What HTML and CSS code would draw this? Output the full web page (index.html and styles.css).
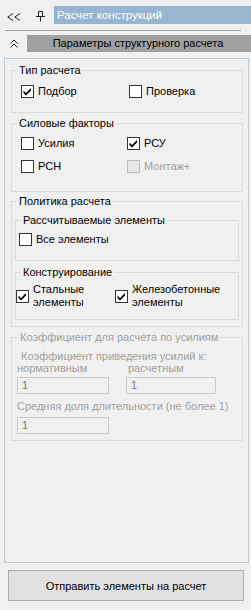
FILE: index.html
```html
<!DOCTYPE html>
<html lang="ru">
<head>
<meta charset="utf-8">
<title>Расчет конструкций</title>
<link rel="stylesheet" href="styles.css">
</head>
<body>
<div class="toprow">
  <span class="collapse"><svg width="14" height="8" viewBox="0 0 14 8"><path d="M6 0.5 L0.8 4 L6 7.5 M13 0.5 L7.8 4 L13 7.5" fill="none" stroke="#222" stroke-width="1"/></svg></span>
  <span class="pin"><svg width="9" height="11" viewBox="0 0 9 11"><path d="M2.5 0.5 H6.5 V5.5 M2.5 0.5 V5.5 M0 5.5 H9 M4.5 5.5 V10.5" fill="none" stroke="#222" stroke-width="1"/></svg></span>
  <div class="title">Расчет конструкций</div>
</div>
<div class="sep"></div>
<div class="secrow">
  <span class="chev"><svg width="8" height="9" viewBox="0 0 8 9"><path d="M0.5 4.5 L4 1 L7.5 4.5 M0.5 8.5 L4 5 L7.5 8.5" fill="none" stroke="#222" stroke-width="1"/></svg></span>
  <div class="secbar">Параметры структурного расчета</div>
</div>
<div class="panel">
  <fieldset class="grp g1">
    <legend>Тип расчета</legend>
    <div class="body cols c108">
      <label class="chk"><span class="box"><svg class="tick" width="11" height="11" viewBox="0 0 11 11"><path d="M1.5 4.5 L4 7 L9 2 L9 4.5 L4 9.5 L1.5 7 Z" fill="#000"/></svg></span>Подбор</label>
      <label class="chk"><span class="box"></span>Проверка</label>
    </div>
  </fieldset>
  <fieldset class="grp g2">
    <legend>Силовые факторы</legend>
    <div class="body cols c106">
      <label class="chk"><span class="box"></span>Усилия</label>
      <label class="chk"><span class="box"><svg class="tick" width="11" height="11" viewBox="0 0 11 11"><path d="M1.5 4.5 L4 7 L9 2 L9 4.5 L4 9.5 L1.5 7 Z" fill="#000"/></svg></span>РСУ</label>
      <label class="chk"><span class="box"></span>РСН</label>
      <label class="chk dis"><span class="box"></span>Монтаж+</label>
    </div>
  </fieldset>
  <fieldset class="grp g3">
    <legend>Политика расчета</legend>
    <div class="body">
      <fieldset class="grp ga">
        <legend>Рассчитываемые элементы</legend>
        <div class="body">
          <label class="chk"><span class="box"></span>Все элементы</label>
        </div>
      </fieldset>
      <fieldset class="grp gb">
        <legend>Конструирование</legend>
        <div class="body cols c99">
          <label class="chk two"><span class="box"><svg class="tick" width="11" height="11" viewBox="0 0 11 11"><path d="M1.5 4.5 L4 7 L9 2 L9 4.5 L4 9.5 L1.5 7 Z" fill="#000"/></svg></span><span class="lbl">Стальные<br>элементы</span></label>
          <label class="chk two"><span class="box"><svg class="tick" width="11" height="11" viewBox="0 0 11 11"><path d="M1.5 4.5 L4 7 L9 2 L9 4.5 L4 9.5 L1.5 7 Z" fill="#000"/></svg></span><span class="lbl">Железобетонные<br>элементы</span></label>
        </div>
      </fieldset>
    </div>
  </fieldset>
  <fieldset class="grp g4">
    <legend>Коэффициент для расчета по усилиям</legend>
    <div class="body">
      <div class="txt t1">Коэффициент приведения усилий к:</div>
      <div class="pair">
        <div class="txt">нормативным</div>
        <div class="txt t2">расчетным</div>
      </div>
      <div class="pair inrow">
        <div class="inp w92">1</div>
        <div class="inp w90">1</div>
      </div>
      <div class="txt t3">Средняя доля длительности (не более 1)</div>
      <div class="inp w92 i3">1</div>
    </div>
  </fieldset>
</div>
<button class="send" type="button">Отправить элементы на расчет</button>
</body>
</html>
```

FILE: styles.css
```css
* { box-sizing: border-box; }

body {
  margin: 0;
  width: 251px;
  height: 610px;
  overflow: hidden;
  background: #f0f0f0;
  font-family: "Liberation Sans", Arial, sans-serif;
  font-size: 11px;
  color: #000;
}

.toprow {
  display: flex;
  align-items: flex-start;
  height: 18px;
  margin-top: 6px;
}

.collapse {
  display: flex;
  width: 14px;
  height: 8px;
  margin: 7px 0 0 7px;
}

.pin {
  display: flex;
  width: 9px;
  height: 11px;
  margin: 5px 0 0 15px;
}

.title {
  flex: 1;
  margin-left: 9px;
  height: 18px;
  line-height: 18px;
  padding-left: 3px;
  background: #99b4d1;
  color: #fff;
  font-size: 11.5px;
}

.sep {
  width: 236px;
  height: 1px;
  margin: 6px 0 0 5px;
  background: #a0a0a0;
}

.secrow {
  display: flex;
  align-items: flex-start;
  height: 17px;
  margin-top: 4px;
}

.chev {
  display: flex;
  width: 8px;
  height: 9px;
  margin: 4px 0 0 10px;
}

.secbar {
  flex: 1;
  margin-left: 9px;
  height: 17px;
  line-height: 17px;
  text-align: center;
  background: #a0a0a0;
  padding-right: 2px;
}

.panel {
  width: 245px;
  height: 505px;
  margin: 6px 0 0 4px;
  padding: 4px 5px 0 6px;
  border: 1px solid #bccbda;
}

.grp {
  margin: 0;
  padding: 0;
  min-width: 0;
  border: 1px solid #dcdcdc;
}

.grp legend {
  padding: 0 2px;
  margin-left: 5px;
  line-height: 14px;
}

.g2 { margin-top: 3px; }
.g3 { margin-top: 2px; }
.g4 { margin-top: 3px; }
.gb { margin-top: 4px; }

.g1 > .body { padding: 6px 0 12px 9px; }
.g2 > .body { padding: 5px 0 16px 9px; row-gap: 6px; }
.g3 > .body { padding: 5px 3px 6px 3px; }
.ga > .body { padding: 4px 0 12px 3px; }
.gb > .body { padding: 4px 0 10px 0; }

.cols { display: grid; }
.c108 { grid-template-columns: 108px 1fr; }
.c106 { grid-template-columns: 106px 1fr; }
.c99 { grid-template-columns: 99px 1fr; }

.chk {
  display: flex;
  align-items: center;
  gap: 4px;
  height: 17px;
  line-height: 13px;
  white-space: nowrap;
}

.chk.two { height: 26px; }

.box {
  flex: none;
  display: flex;
  width: 13px;
  height: 13px;
  border: 1px solid #333;
  background: #fff;
}

.chk.dis { color: #a0a0a0; }
.chk.dis .box {
  border-color: #bcbcbc;
  background: #e6e6e6;
}

.g4 { color: #a0a0a0; }
.g4 legend { margin-left: 6px; }
.g4 > .body { padding: 6px 0 6px 5px; }

.txt { line-height: 12px; white-space: nowrap; }
.t1 { margin-left: 4px; }
.t2 { margin-left: 2px; }
.t3 { margin-top: 6px; }

.pair {
  display: grid;
  grid-template-columns: 109px 90px;
}

.inrow { margin-top: 3px; }

.inp {
  height: 17px;
  line-height: 15px;
  padding-left: 4px;
  border: 1px solid #cccccc;
  background: #f0f0f0;
  color: #7a7a7a;
}

.w92 { width: 92px; }
.w90 { width: 90px; }
.i3 { margin-top: 5px; }

.send {
  display: block;
  width: 236px;
  height: 31px;
  margin: 7px 0 0 8px;
  padding: 0;
  border: 1px solid #adadad;
  background: #e1e1e1;
  font-family: "Liberation Sans", Arial, sans-serif;
  font-size: 11px;
  color: #000;
}
```
